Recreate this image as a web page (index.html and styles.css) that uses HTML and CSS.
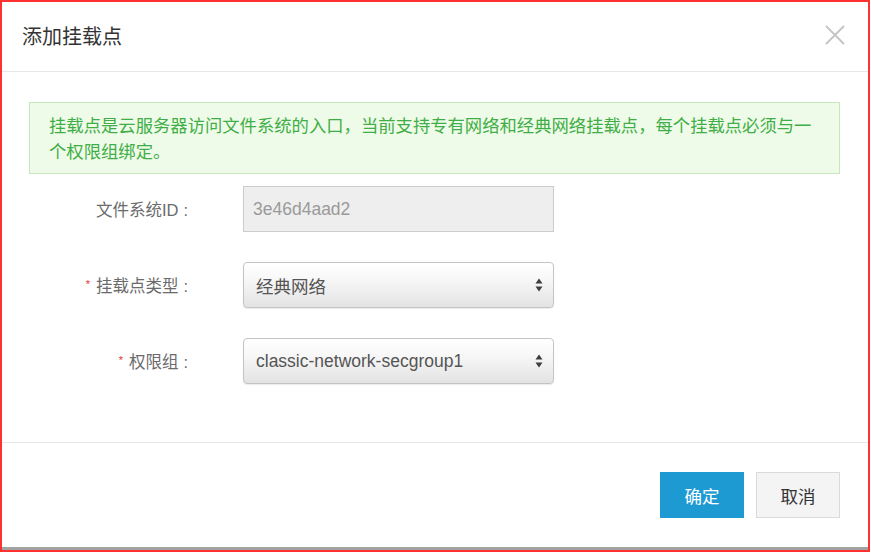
FILE: index.html
```html
<!DOCTYPE html>
<html lang="zh-CN">
<head>
<meta charset="utf-8">
<title>添加挂载点</title>
<link rel="stylesheet" href="styles.css">
</head>
<body>
<div class="frame">
  <div class="dialog">
    <div class="dialog-header">
      <div class="dialog-title">添加挂载点</div>
      <svg class="close" width="20" height="20" viewBox="0 0 20 20" aria-label="关闭">
        <path d="M1.5 1.5 L18.5 18.5 M18.5 1.5 L1.5 18.5" stroke="#c4c4c4" stroke-width="1.8" fill="none" stroke-linecap="round"/>
      </svg>
    </div>
    <div class="dialog-body">
      <div class="alert">挂载点是云服务器访问文件系统的入口，当前支持专有网络和经典网络挂载点，每个挂载点必须与一个权限组绑定。</div>
      <div class="form">
        <div class="form-row">
          <div class="form-label">文件系统ID<span class="colon">:</span></div>
          <div class="control input-disabled">3e46d4aad2</div>
        </div>
        <div class="form-row">
          <div class="form-label"><span class="req">*</span>挂载点类型<span class="colon">:</span></div>
          <div class="control select">
            <span class="select-text">经典网络</span>
            <svg class="arrows" width="8" height="14" viewBox="0 0 8 14"><path d="M4 0.5 L7.5 5.5 L0.5 5.5 Z M0.5 8.5 L7.5 8.5 L4 13.5 Z" fill="#3d3d3d"/></svg>
          </div>
        </div>
        <div class="form-row">
          <div class="form-label"><span class="req">*</span>权限组<span class="colon">:</span></div>
          <div class="control select">
            <span class="select-text">classic-network-secgroup1</span>
            <svg class="arrows" width="8" height="14" viewBox="0 0 8 14"><path d="M4 0.5 L7.5 5.5 L0.5 5.5 Z M0.5 8.5 L7.5 8.5 L4 13.5 Z" fill="#3d3d3d"/></svg>
          </div>
        </div>
      </div>
    </div>
    <div class="dialog-footer">
      <button class="btn btn-primary">确定</button>
      <button class="btn btn-default">取消</button>
    </div>
  </div>
</div>
</body>
</html>
```
FILE: styles.css
```css
html, body {
  margin: 0;
  padding: 0;
  background: #ffffff;
}
body {
  font-family: "Liberation Sans", "Noto Sans CJK SC", sans-serif;
  color: #333;
}
.frame {
  width: 870px;
  height: 552px;
  box-sizing: border-box;
  border: 2px solid #ff3030;
  background: #fff;
}
.dialog {
  height: 100%;
  box-sizing: border-box;
  border-bottom: 3px solid #a3a3a3;
  display: flex;
  flex-direction: column;
}
.dialog-header {
  height: 69px;
  border-bottom: 1px solid #e6e6e6;
  display: flex;
  align-items: center;
  justify-content: space-between;
  padding: 0 23px 0 20px;
  flex: none;
}
.dialog-title {
  font-size: 20px;
  color: #333;
  margin-top: -2px;
}
.close {
  display: block;
  margin-top: -4px;
}
.dialog-body {
  flex: 1;
  padding: 30px 28px 0 27px;
}
.alert {
  border: 1px solid #c5e7bb;
  background: #effbe9;
  color: #3fae46;
  font-size: 17.33px;
  line-height: 26px;
  padding: 10px 20px 8px 19px;
}
.form {
  margin-top: 12px;
  display: flex;
  flex-direction: column;
  gap: 30px;
}
.form-row {
  display: flex;
  align-items: center;
}
.form-label {
  width: 159px;
  margin-right: 55px;
  text-align: right;
  font-size: 16.5px;
  color: #6b6b6b;
}
.colon {
  margin-left: 5px;
}
.req {
  color: #e5322d;
  font-size: 11px;
  vertical-align: 4px;
  margin-right: 6px;
}
.control {
  width: 311px;
  height: 46px;
  box-sizing: border-box;
  font-size: 17.5px;
  display: flex;
  align-items: center;
}
.input-disabled {
  background: #eeeeee;
  border: 1px solid #cccccc;
  color: #9a9a9a;
  padding-left: 9px;
}
.select {
  border: 1px solid #c4c4c4;
  border-radius: 4px;
  background: linear-gradient(#ffffff, #f8f8f8 35%, #e3e3e3);
  box-shadow: 0 1px 1px rgba(0, 0, 0, 0.08);
  justify-content: space-between;
  padding: 0 10px 0 12px;
  color: #555555;
}
.arrows {
  display: block;
}
.dialog-footer {
  flex: none;
  border-top: 1px solid #e6e6e6;
  padding: 29px 28px 29px 0;
  display: flex;
  justify-content: flex-end;
  gap: 12px;
}
.btn {
  width: 84px;
  height: 46px;
  box-sizing: border-box;
  font-family: "Liberation Sans", "Noto Sans CJK SC", sans-serif;
  font-size: 17.5px;
  border-radius: 0;
  padding: 0;
  cursor: pointer;
}
.btn-primary {
  background: #1e9ad3;
  border: 1px solid #1e9ad3;
  color: #ffffff;
}
.btn-default {
  background: #f4f4f4;
  border: 1px solid #dadada;
  color: #333;
}
```
